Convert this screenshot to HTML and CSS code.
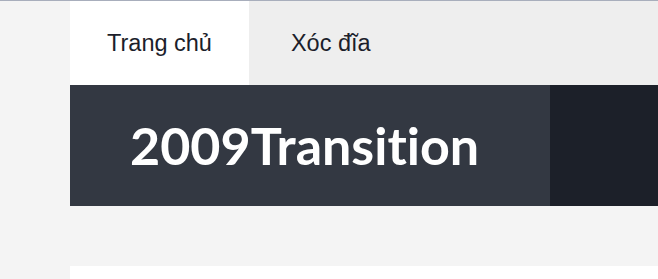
FILE: index.html
```html
<!DOCTYPE html>
<html lang="vi">
<head>
<meta charset="utf-8">
<title>2009Transition</title>
<link rel="stylesheet" href="styles.css">
</head>
<body>
<div class="page">
  <div class="gutter"></div>
  <div class="main">
    <nav class="nav">
      <a class="tab active" href="#">Trang chủ</a>
      <a class="tab" href="#">Xóc đĩa</a>
    </nav>
    <header class="hero">
      <div class="hero-left"><h1 class="title">2009Transition</h1></div>
      <div class="hero-right"></div>
    </header>
    <div class="spacer"></div>
    <div class="content"></div>
  </div>
</div>
</body>
</html>
```
FILE: styles.css
```css
html, body {
  margin: 0;
  padding: 0;
  background: #f4f4f4;
}
body {
  border-top: 1px solid #a8aebc;
  font-family: "Liberation Sans", Arial, sans-serif;
}
.page {
  display: flex;
  min-height: 278px;
}
.gutter {
  width: 70px;
  flex: none;
}
.main {
  flex: 1;
  display: flex;
  flex-direction: column;
}
.nav {
  display: flex;
  gap: 5px;
  height: 84px;
  background: #eeeeee;
}
.tab {
  display: flex;
  align-items: center;
  padding: 0 37px;
  font-size: 23.5px;
  color: #1c1e2b;
  text-decoration: none;
}
.tab.active {
  background: #ffffff;
}
.hero {
  display: flex;
  height: 121px;
}
.hero-left {
  width: 480px;
  background: #333842;
  display: flex;
  align-items: center;
  padding-left: 60px;
  box-sizing: border-box;
}
.hero-right {
  flex: 1;
  background: #1c2029;
}
.title {
  margin: 0;
  font-family: Lato, "Noto Sans", sans-serif;
  font-weight: 700;
  font-size: 52px;
  font-variant-ligatures: none;
  color: #ffffff;
  line-height: 1.2;
}
.spacer {
  height: 60px;
}
.content {
  flex: 1;
  background: #ffffff;
}
```
